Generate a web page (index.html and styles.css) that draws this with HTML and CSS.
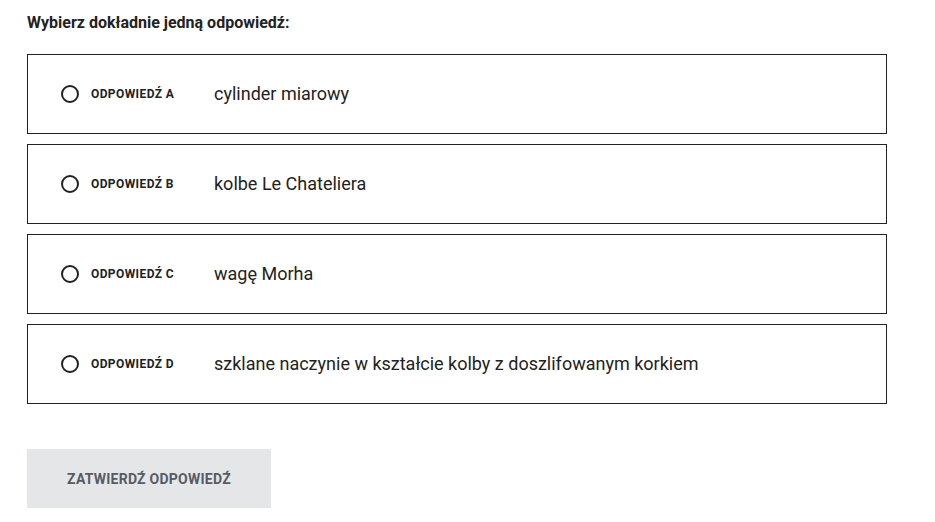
FILE: index.html
```html
<!DOCTYPE html>
<html lang="pl">
<head>
  <meta charset="UTF-8" />
  <title>Pytanie</title>
  <link rel="stylesheet" href="styles.css">
</head>
<body>
  <div class="quiz">
    <h3 class="quiz-title">Wybierz dokładnie jedną odpowiedź:</h3>

    <div class="answers">
      <label class="answer">
        <span class="radio"></span>
        <span class="answer-label">Odpowiedź A</span>
        <span class="answer-text">cylinder miarowy</span>
      </label>
      <label class="answer">
        <span class="radio"></span>
        <span class="answer-label">Odpowiedź B</span>
        <span class="answer-text">kolbe Le Chateliera</span>
      </label>
      <label class="answer">
        <span class="radio"></span>
        <span class="answer-label">Odpowiedź C</span>
        <span class="answer-text">wagę Morha</span>
      </label>
      <label class="answer">
        <span class="radio"></span>
        <span class="answer-label">Odpowiedź D</span>
        <span class="answer-text">szklane naczynie w kształcie kolby z doszlifowanym korkiem</span>
      </label>
    </div>

    <button class="submit-btn">Zatwierdź odpowiedź</button>
  </div>
</body>
</html>
```

FILE: styles.css
```css
* {
  box-sizing: border-box;
  margin: 0;
  padding: 0;
}

body {
  background: #ffffff;
  font-family: Roboto, "Noto Sans", sans-serif;
  color: #222;
}

.quiz {
  width: 860px;
  margin: 13px 0 0 27px;
}

.quiz-title {
  font-size: 16px;
  font-weight: 700;
  line-height: 20px;
  color: #222;
  margin-bottom: 21px;
}

.answers {
  display: flex;
  flex-direction: column;
  gap: 10px;
}

.answer {
  display: flex;
  align-items: center;
  height: 80px;
  border: 1px solid #222;
  padding-left: 33px;
  cursor: pointer;
}

.radio {
  width: 18px;
  height: 18px;
  border: 2px solid #222;
  border-radius: 50%;
  flex-shrink: 0;
}

.answer-label {
  width: 123px;
  margin-left: 12px;
  font-size: 12px;
  font-weight: 700;
  letter-spacing: 0.4px;
  text-transform: uppercase;
  color: #222;
}

.answer-text {
  font-size: 18px;
  line-height: 22px;
  margin-top: -1px;
  color: #222;
}

.submit-btn {
  margin-top: 45px;
  width: 244px;
  height: 59px;
  border: none;
  background: #e5e6e8;
  color: #575b66;
  font-family: Roboto, "Noto Sans", sans-serif;
  font-size: 14px;
  font-weight: 700;
  letter-spacing: 0.25px;
  text-transform: uppercase;
  cursor: pointer;
}
```
